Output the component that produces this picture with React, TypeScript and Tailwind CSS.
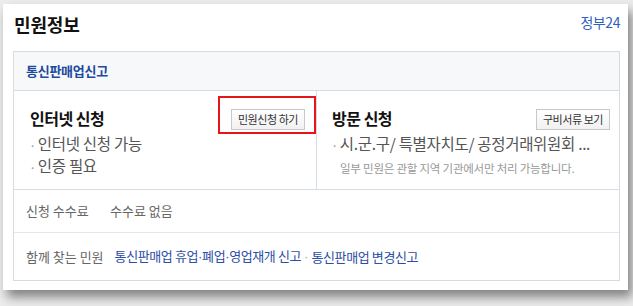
import React from "react";

const font = { fontFamily: '"Noto Sans CJK KR", "Noto Sans", sans-serif' };

const Dot: React.FC<{ className?: string }> = ({ className = "" }) => (
  <span className={`font-['Liberation_Sans'] ${className}`}>·</span>
);

const SmallButton: React.FC<{ label: string; marked?: boolean }> = ({ label, marked }) => (
  <div className="relative">
    <button className="h-[21px] px-[6px] border border-[#c8c8c8] bg-gradient-to-b from-white to-[#f1f1f1] text-[11px] leading-none text-[#333] tracking-[-0.04em]">
      {label}
    </button>
    {marked && (
      <div className="absolute -left-[13px] -top-[9px] -right-[11px] -bottom-[4px] border-2 border-[#e8141b] pointer-events-none" />
    )}
  </div>
);

export default function App() {
  return (
    <div className="w-[633px] h-[306px] bg-[#ececec] pt-[4px] pl-[3px]" style={font}>
      <div className="w-[625px] h-[286px] bg-white pl-[10px] pr-[8px] shadow-[4px_7px_10px_rgba(0,0,0,0.45)]">
        <div className="h-[47px] flex items-center justify-between pl-[1px] pb-[6px]">
          <h1 className="text-[18px] font-bold text-[#111] tracking-[-0.01em]">민원정보</h1>
          <a className="text-[14px] text-[#2f5fbf] tracking-[-0.03em] -mt-[4px]">정부24</a>
        </div>

        <div className="border border-[#d6dce4]">
          <div className="h-[39px] bg-[#f7f8fa] border-b border-[#d6dce4] flex items-center pl-[12px]">
            <span className="text-[13px] font-bold text-[#1e4aa0] tracking-[-0.02em]">통신판매업신고</span>
          </div>

          <div className="flex h-[99px] border-b border-[#d6dce4]">
            <div className="w-[303px] border-r border-[#d6dce4] pl-[16px] pr-[11px] pt-[14px]">
              <div className="flex items-center justify-between">
                <span className="text-[16px] font-bold text-[#111] tracking-[-0.03em]">인터넷 신청</span>
                <SmallButton label="민원신청 하기" marked />
              </div>
              <ul className="mt-[3px] text-[15.5px] text-[#555] leading-[20px] tracking-[-0.02em]">
                <li><Dot className="text-[#999] mr-[3px]" />인터넷 신청 가능</li>
                <li><Dot className="text-[#999] mr-[3px]" />인증 필요</li>
              </ul>
            </div>
            <div className="flex-1 pl-[15px] pr-[9px] pt-[14px]">
              <div className="flex items-center justify-between">
                <span className="text-[16px] font-bold text-[#111] tracking-[-0.03em]">방문 신청</span>
                <SmallButton label="구비서류 보기" />
              </div>
              <div className="mt-[3px] text-[15.5px] text-[#555] leading-[20px] tracking-[-0.02em] whitespace-nowrap">
                <Dot className="text-[#999] mr-[3px]" />시.군.구/ 특별자치도/ 공정거래위원회 ...
              </div>
              <div className="mt-[5px] pl-[8px] text-[11.5px] text-[#999] tracking-[-0.02em] whitespace-nowrap">
                일부 민원은 관할 지역 기관에서만 처리 가능합니다.
              </div>
            </div>
          </div>

          <div className="h-[43px] flex items-center pl-[12px] border-b border-[#e3e7ec] text-[13px] text-[#666]">
            <span className="w-[84px]">신청 수수료</span>
            <span>수수료 없음</span>
          </div>

          <div className="h-[47px] flex items-center pl-[12px] text-[13px] whitespace-nowrap">
            <span className="text-[#666] mr-[11px]">함께 찾는 민원</span>
            <a className="text-[#2b4ea6] tracking-[-0.03em]">
              통신판매업 휴업<Dot />폐업<Dot />영업재개 신고
            </a>
            <Dot className="text-[#aaa] mx-[3px]" />
            <a className="text-[#2b4ea6] tracking-[-0.03em]">통신판매업 변경신고</a>
          </div>
        </div>
      </div>
    </div>
  );
}
